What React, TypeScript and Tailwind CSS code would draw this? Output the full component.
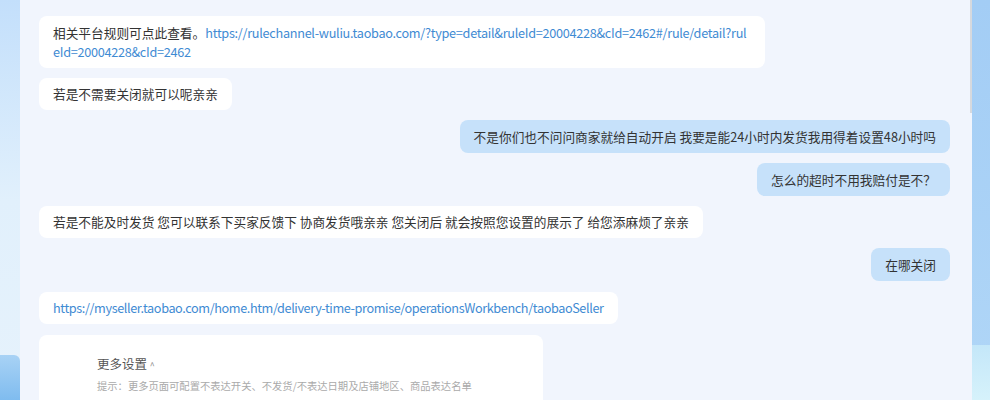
import React from "react";

const font = { fontFamily: '"Noto Sans CJK SC", "Noto Sans", sans-serif' };

function Left({ children }: { children: React.ReactNode }) {
  return (
    <div className="flex">
      <div className="bg-white rounded-lg px-[14px] py-[6px] text-[12.7px] leading-[20px] text-[#333] whitespace-nowrap">
        {children}
      </div>
    </div>
  );
}

function Right({ children }: { children: React.ReactNode }) {
  return (
    <div className="flex justify-end">
      <div className="bg-[#c6e1fa] rounded-lg px-[14px] pt-[7px] pb-[6px] text-[12.7px] leading-[20px] text-[#333] whitespace-nowrap">
        {children}
      </div>
    </div>
  );
}

export default function App() {
  return (
    <div className="w-[990px] h-[400px] overflow-hidden flex bg-[#f1f5fd]" style={font}>
      <div className="w-[20px] h-full flex flex-col bg-gradient-to-b from-[#c3dffb] via-[#e1f0fc] to-[#e6f2fc]">
        <div className="flex-1" />
        <div className="h-[45px] bg-gradient-to-b from-[#a8d2f5] to-[#7fbcef] rounded-tr-[6px]" />
      </div>
      <div className="flex-1 h-full flex flex-col gap-[10px] pl-[19px] pr-[20px] pt-[16px]">
        <div className="flex">
          <div className="bg-white rounded-lg pl-[14px] pr-[19px] pt-[7px] pb-[7px] text-[12.7px] leading-[19px] text-[#333]">
            <div className="whitespace-nowrap">
              相关平台规则可点此查看。
              <span className="text-[#3f8bd3] tracking-[-0.29px]">https://rulechannel-wuliu.taobao.com/?type=detail&amp;ruleId=20004228&amp;cId=2462#/rule/detail?rul</span>
            </div>
            <div className="whitespace-nowrap text-[#3f8bd3] tracking-[-0.29px]">eId=20004228&amp;cId=2462</div>
          </div>
        </div>
        <Left>若是不需要关闭就可以呢亲亲</Left>
        <Right>不是你们也不问问商家就给自动开启 我要是能24小时内发货我用得着设置48小时吗</Right>
        <Right>怎么的超时不用我赔付是不？</Right>
        <Left>若是不能及时发货 您可以联系下买家反馈下 协商发货哦亲亲 您关闭后 就会按照您设置的展示了 给您添麻烦了亲亲</Left>
        <Right>在哪关闭</Right>
        <div className="flex mt-[1px]">
          <div className="bg-white rounded-lg px-[14px] py-[6px] text-[12.7px] leading-[20px] whitespace-nowrap">
            <span className="text-[#3f8bd3] tracking-[-0.4px]">https://myseller.taobao.com/home.htm/delivery-time-promise/operationsWorkbench/taobaoSeller</span>
          </div>
        </div>
        <div className="flex mt-[1px]">
          <div className="w-[504px] h-[80px] bg-white rounded-lg pl-[58px] pt-[20px]">
            <div className="text-[12.5px] leading-[18px] text-[#555]">
              更多设置 <span className="text-[9px] text-[#888]">^</span>
            </div>
            <div className="text-[10.3px] leading-[14px] mt-[4px] text-[#aaa]">
              提示：更多页面可配置不表达开关、不发货/不表达日期及店铺地区、商品表达名单
            </div>
          </div>
        </div>
      </div>
      <div className="w-[2px] h-full bg-[#f1f5fd] flex flex-col">
        <div className="h-[113px] bg-[#d6d9de]" />
      </div>
      <div className="w-[18px] h-full flex flex-col bg-gradient-to-b from-[#a3cdf5] to-[#b0d6f7]">
        <div className="flex-1" />
        <div className="h-[55px] bg-gradient-to-b from-[#c4e7f9] to-[#d6f2fb]" />
      </div>
    </div>
  );
}
